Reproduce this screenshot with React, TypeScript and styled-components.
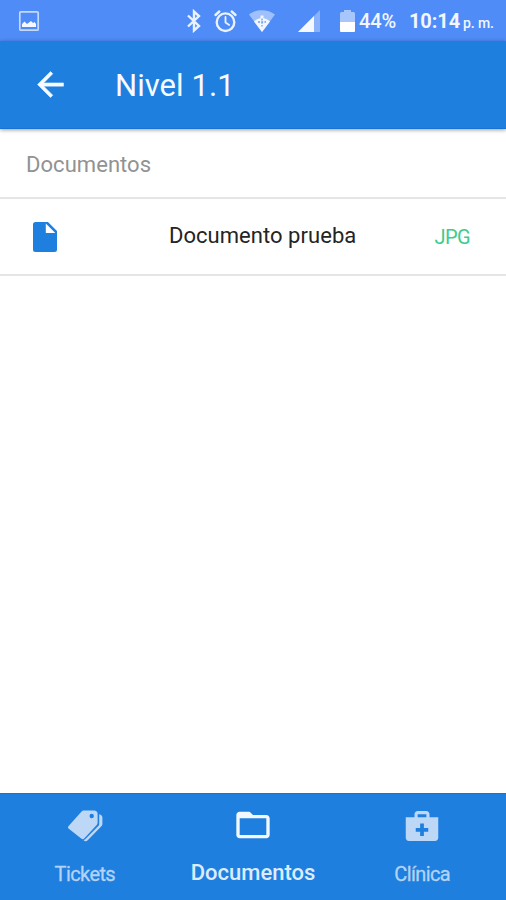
import React from "react";
import styled, { createGlobalStyle } from "styled-components";
import { IoMdMedkit } from "react-icons/io";
import { MdFolderOpen } from "react-icons/md";

const GlobalStyle = createGlobalStyle`
  * { box-sizing: border-box; }
  body { margin: 0; background: #fff; font-family: Roboto, "Liberation Sans", sans-serif; }
`;

const Screen = styled.div`
  display: flex;
  flex-direction: column;
  width: 506px;
  height: 900px;
  overflow: hidden;
  background: #fff;
`;

const StatusBar = styled.header`
  display: flex;
  flex: none;
  align-items: center;
  height: 41px;
  padding: 0 12px 0 18px;
  background: #4f8cf7;
  color: #f1f6ff;
`;

const StatusIcon = styled.svg<{ $gap?: number; $push?: boolean }>`
  flex: none;
  display: block;
  margin-left: ${({ $gap = 0, $push }) => ($push ? "auto" : `${$gap}px`)};
`;

const Charge = styled.span`
  width: 39px;
  margin: 1px 0 0 3px;
  font-size: 20px;
  font-weight: 500;
  line-height: 24px;
  letter-spacing: -0.1px;
  white-space: nowrap;
`;

const Clock = styled.span`
  width: 85px;
  margin: 2px 0 0 11px;
  font-size: 20px;
  font-weight: 700;
  line-height: 24px;
  letter-spacing: -0.1px;
  white-space: nowrap;
`;

const Meridiem = styled.span`
  margin-left: 3px;
  font-size: 14px;
  font-weight: 500;
`;

const TitleBar = styled.div`
  display: flex;
  flex: none;
  align-items: center;
  height: 88px;
  padding-left: 31px;
  background: #1f7fdf;
  border-bottom: 1px solid #1874d2;
  box-shadow: 0 1px 4px rgba(0, 0, 0, 0.4);
  color: #f7fbff;
  z-index: 1;
`;

const Title = styled.h1`
  margin: 3px 0 0 45px;
  font-size: 31px;
  font-weight: 400;
  line-height: 40px;
  letter-spacing: 0.05px;
`;

const Main = styled.main`
  flex: 1;
`;

const SectionHeading = styled.h2`
  height: 70px;
  margin: 0;
  padding: 0 26px;
  border-bottom: 2px solid #e5e5e5;
  color: #929292;
  font-size: 22px;
  font-weight: 400;
  line-height: 72px;
  letter-spacing: 0.05px;
`;

const DocumentRow = styled.div`
  display: grid;
  grid-template-columns: 142px 1fr auto;
  align-items: center;
  height: 77px;
  padding: 0 36px 0 27px;
  border-bottom: 2px solid #e5e5e5;
  color: #1f7fdf;
`;

const DocumentName = styled.span`
  margin-top: -2px;
  color: #242424;
  font-size: 22px;
  letter-spacing: 0.04px;
`;

const FileType = styled.span`
  color: #3fcb8d;
  font-size: 20px;
  letter-spacing: -0.6px;
`;

const TabBar = styled.nav`
  display: grid;
  flex: none;
  grid-template-columns: repeat(3, 1fr);
  height: 107px;
  border-top: 1px solid #1874d2;
  background: #1f7fdf;
`;

const Tab = styled.div<{ $active?: boolean }>`
  display: flex;
  flex-direction: column;
  align-items: center;
  padding: ${({ $active }) => ($active ? "11px 0 0" : "12px 0 0 1px")};
  color: ${({ $active }) => ($active ? "#f3f8ff" : "#bcd8f6")};
`;

const TabLabel = styled.span<{ $active?: boolean }>`
  margin-top: ${({ $active }) => ($active ? 14 : 15)}px;
  color: ${({ $active }) => ($active ? "#dcecff" : "#b2d3f6")};
  font-size: ${({ $active }) => ($active ? 22 : 20)}px;
  font-weight: ${({ $active }) => ($active ? 500 : 400)};
  line-height: 27px;
  letter-spacing: ${({ $active }) => ($active ? 0 : -0.6)}px;
  -webkit-text-stroke: ${({ $active }) => ($active ? 0 : 0.3)}px currentColor;
`;

function BackIcon() {
  return (
    <svg width="39" height="39" viewBox="0 0 24 24">
      <path
        d="M20 11H7.83l5.590-5.590L12 4l-8 8 8 8 1.410-1.410L7.830 13H20v-2z"
        fill="currentColor"
        stroke="currentColor"
        strokeWidth="0.3"
      />
    </svg>
  );
}

function TagsIcon({ size }: { size: number }) {
  return (
    <svg width={size} height={size} viewBox="0 0 40 40" fill="currentColor">
      <path
        fillRule="evenodd"
        d="M3.400 20.200 16.600 5.400Q17.500 4.500 18.800 4.500H29Q32.600 4.500 32.600 8v8.800q0 1.200-.9 2.100L19.200 32.400q-1.500 1.400-3 .1L3.500 22.400q-1.100-1-.1-2.200ZM26.700 7.800a2.200 2.200 0 1 0 0 4.400 2.200 2.200 0 0 0 0-4.400Z"
      />
      <path d="M34.200 8.300q3.200.5 3.200 3.500v6.300q0 1.300-1 2.200L22.700 34.300q-1.700 1.600-3.400.4l-.8-.7 1.500-.6L33.300 20.100q.9-.9.9-2.200Z" />
    </svg>
  );
}

function FileIcon() {
  return (
    <svg width="36" height="36" viewBox="0 0 36 36">
      <path
        d="M8.500 3H21l9 9v18.500a2.500 2.500 0 0 1-2.500 2.500h-19A2.500 2.500 0 0 1 6 30.500v-25A2.500 2.500 0 0 1 8.500 3ZM18.800 4.500V14h9.500Z"
        fill="currentColor"
        fillRule="evenodd"
      />
    </svg>
  );
}

const tabs = [
  { label: "Tickets", Icon: TagsIcon },
  { label: "Documentos", Icon: MdFolderOpen, active: true },
  { label: "Clínica", Icon: IoMdMedkit },
];

function PhoneStatus() {
  return (
    <StatusBar>
      <StatusIcon width="22" height="22" viewBox="0 0 22 22">
        <rect x="1.8" y="1.8" width="18.4" height="18.4" rx="1" fill="none" stroke="#c5d9fc" strokeWidth="1.7" />
        <path d="M4 17v-3l2.500-2.500L9 14l4-3 2 2 1.500-1L18 14v3z" fill="#f5f9ff" />
      </StatusIcon>
      <StatusIcon $push width="16" height="24" viewBox="0 0 16 24" fill="none" stroke="#eaf2ff" strokeWidth="2.4">
        <path d="M2 6.500 13 17 8 21.500V2.500L13 7 2 17.500" />
      </StatusIcon>
      <StatusIcon $gap={11} width="25" height="24" viewBox="0 0 25 24" fill="none" stroke="#eaf2ff" strokeLinecap="round">
        <circle cx="12.5" cy="13.2" r="8.8" strokeWidth="2.4" />
        <path d="M12.500 8v5.600l3.700 2.300" strokeWidth="1.8" />
        <path d="M2.500 6l3.800-3.500M22.500 6l-3.800-3.500" strokeWidth="2.4" />
      </StatusIcon>
      <StatusIcon $gap={10} width="28" height="24" viewBox="0 0 28 24">
        <path d="M1 5.500C8.500-.2 19.500-.2 27 5.500L14 23z" fill="#9fc0fb" />
        <path d="M6 12.500C10.500 7.700 17.500 7.700 22 12.500L14 23z" fill="#f2f7ff" />
        <path d="M14 6.500v4" stroke="#f2f7ff" strokeWidth="3" />
        <path d="M14 9.500v8M10 13h8" stroke="#6c9ff5" strokeWidth="1.3" strokeDasharray="2 1.200" />
      </StatusIcon>
      <StatusIcon $gap={21} width="24" height="24" viewBox="0 0 24 24">
        <path d="M1 23L23 1v22z" fill="#89b2fa" />
        <path d="M1 23L17 7v16z" fill="#f5f9ff" />
      </StatusIcon>
      <StatusIcon $gap={18} width="17" height="24" viewBox="0 0 17 24">
        <path d="M2.500 3H5V1h7v2h2.500A1.500 1.500 0 0 1 16 4.500V13H1V4.500A1.500 1.500 0 0 1 2.500 3z" fill="#a7c6fc" />
        <path d="M1 13h15v9a1 1 0 0 1-1 1H2a1 1 0 0 1-1-1z" fill="#fff" />
      </StatusIcon>
      <Charge>44%</Charge>
      <Clock>
        10:14<Meridiem>p. m.</Meridiem>
      </Clock>
    </StatusBar>
  );
}

export default function App() {
  return (
    <>
      <GlobalStyle />
      <Screen>
        <PhoneStatus />
        <TitleBar>
          <BackIcon />
          <Title>Nivel 1.1</Title>
        </TitleBar>
        <Main>
          <SectionHeading>Documentos</SectionHeading>
          <DocumentRow>
            <FileIcon />
            <DocumentName>Documento prueba</DocumentName>
            <FileType>JPG</FileType>
          </DocumentRow>
        </Main>
        <TabBar>
          {tabs.map(({ label, Icon, active }) => (
            <Tab key={label} $active={active}>
              <Icon size={40} />
              <TabLabel $active={active}>{label}</TabLabel>
            </Tab>
          ))}
        </TabBar>
      </Screen>
    </>
  );
}
